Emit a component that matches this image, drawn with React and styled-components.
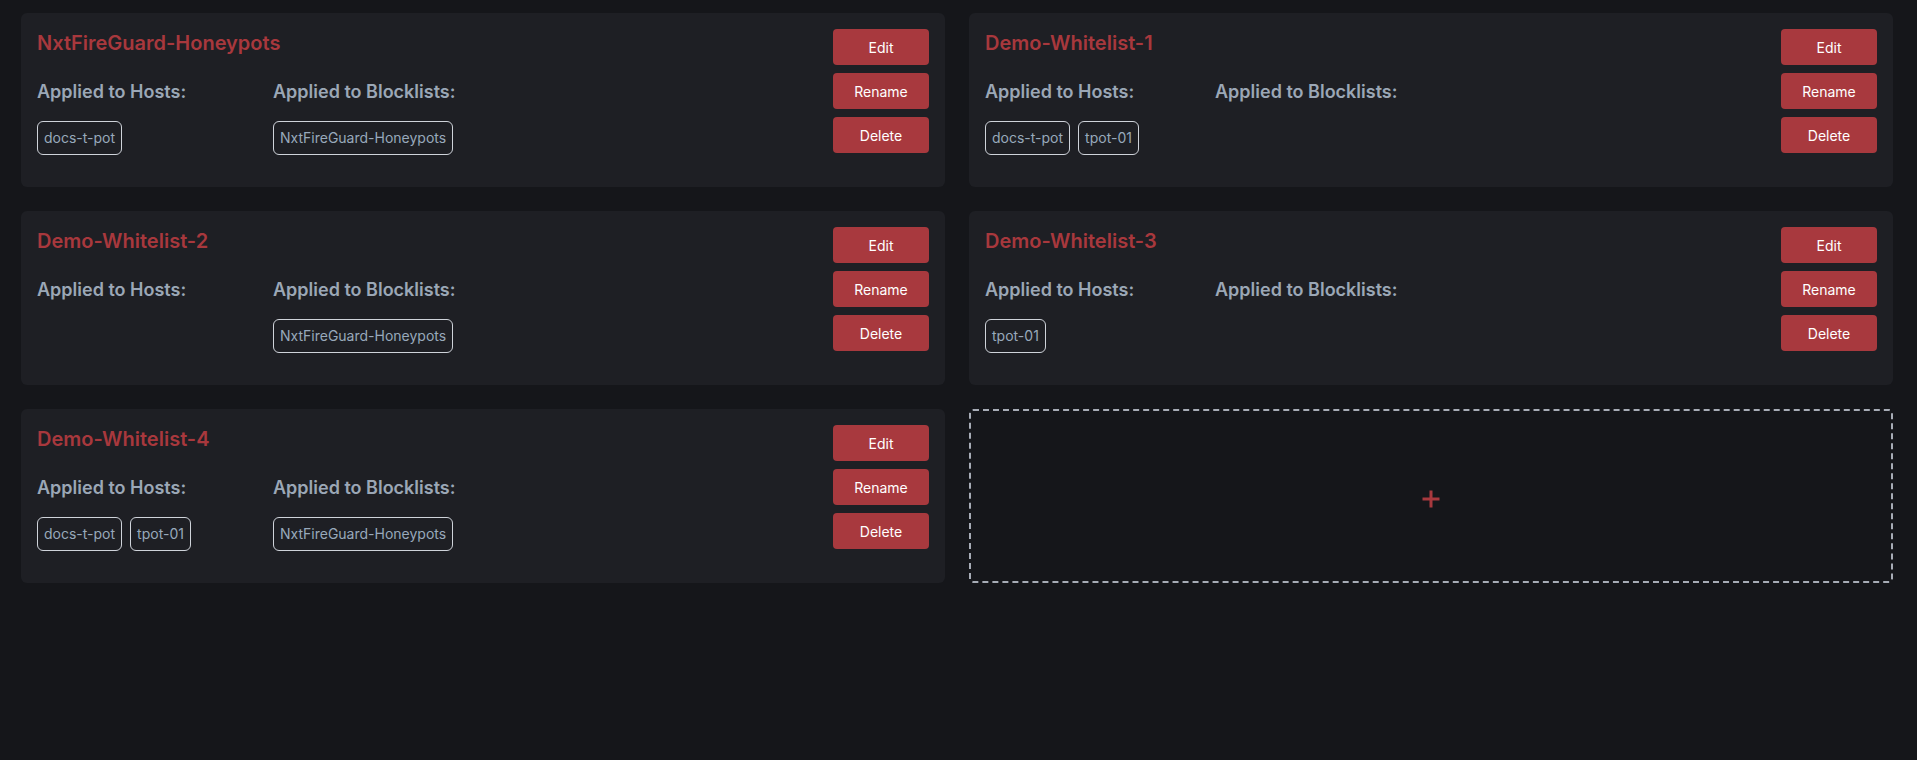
import React from "react";
import styled, { createGlobalStyle } from "styled-components";

const GlobalStyle = createGlobalStyle`
  html, body {
    margin: 0;
    padding: 0;
    background: #15161a;
  }
  body {
    font-family: Inter, "Noto Sans", sans-serif;
    min-height: 760px;
  }
  * { box-sizing: border-box; }
`;

const Page = styled.div`
  padding: 13px 24px 24px 21px;
  background: #15161a;
  min-height: 760px;
`;

const Grid = styled.div`
  display: grid;
  grid-template-columns: 1fr 1fr;
  gap: 24px;
`;

const Card = styled.div`
  display: flex;
  align-items: flex-start;
  gap: 16px;
  padding: 16px;
  background: #1e1f24;
  border-radius: 6px;
  min-height: 174px;
`;

const Info = styled.div`
  flex: 1;
  min-width: 0;
`;

const Title = styled.h2`
  margin: 0 0 22px;
  font-size: 20px;
  line-height: 28px;
  font-weight: 600;
  color: #a8383d;
`;

const Columns = styled.div`
  display: grid;
  grid-template-columns: ${(p) => (p.$hasBlocklists ? "236px" : "230px")} 1fr;
  margin-bottom: 16px;
`;

const Column = styled.div`
  display: flex;
  flex-direction: column;
`;

const Label = styled.div`
  font-size: 18px;
  line-height: 25px;
  font-weight: 600;
  color: #9ba7b6;
  margin-bottom: 17px;
`;

const Chips = styled.div`
  display: flex;
  flex-wrap: wrap;
  gap: 8px;
  min-height: 34px;
`;

const Chip = styled.span`
  display: inline-block;
  padding: 6px;
  border: 1px solid #cfd3da;
  border-radius: 6px;
  font-size: 14px;
  line-height: 20px;
  color: #98a9bb;
  white-space: nowrap;
`;

const Actions = styled.div`
  display: flex;
  flex-direction: column;
  gap: 8px;
  width: 96px;
  flex-shrink: 0;
`;

const Button = styled.button`
  height: 36px;
  width: 96px;
  border: none;
  border-radius: 4px;
  background: #a8393e;
  color: #ffffff;
  font-family: Inter, "Noto Sans", sans-serif;
  font-size: 14px;
  font-weight: 400;
  cursor: pointer;
`;

const AddTile = styled.button`
  display: flex;
  align-items: center;
  justify-content: center;
  min-height: 174px;
  background: transparent;
  border: 2px dashed #a7acb6;
  border-radius: 4px;
  cursor: pointer;
  padding: 0;
  padding-top: 5px;
`;

const data = [
  { name: "NxtFireGuard-Honeypots", hosts: ["docs-t-pot"], blocklists: ["NxtFireGuard-Honeypots"] },
  { name: "Demo-Whitelist-1", hosts: ["docs-t-pot", "tpot-01"], blocklists: [] },
  { name: "Demo-Whitelist-2", hosts: [], blocklists: ["NxtFireGuard-Honeypots"] },
  { name: "Demo-Whitelist-3", hosts: ["tpot-01"], blocklists: [] },
  { name: "Demo-Whitelist-4", hosts: ["docs-t-pot", "tpot-01"], blocklists: ["NxtFireGuard-Honeypots"] },
];

function ListCard({ item }) {
  return (
    <Card>
      <Info>
        <Title>{item.name}</Title>
        <Columns $hasBlocklists={item.blocklists.length > 0}>
          <Column>
            <Label>Applied to Hosts:</Label>
            <Chips>
              {item.hosts.map((h) => (
                <Chip key={h}>{h}</Chip>
              ))}
            </Chips>
          </Column>
          <Column>
            <Label>Applied to Blocklists:</Label>
            <Chips>
              {item.blocklists.map((b) => (
                <Chip key={b}>{b}</Chip>
              ))}
            </Chips>
          </Column>
        </Columns>
      </Info>
      <Actions>
        <Button>Edit</Button>
        <Button>Rename</Button>
        <Button>Delete</Button>
      </Actions>
    </Card>
  );
}

export default function App() {
  return (
    <>
      <GlobalStyle />
      <Page>
        <Grid>
          {data.map((item) => (
            <ListCard key={item.name} item={item} />
          ))}
          <AddTile aria-label="Add whitelist">
            <svg width="18" height="18" viewBox="0 0 18 18">
              <path d="M9 0.5V17.5M0.5 9H17.5" stroke="#a8393e" strokeWidth="3" />
            </svg>
          </AddTile>
        </Grid>
      </Page>
    </>
  );
}
